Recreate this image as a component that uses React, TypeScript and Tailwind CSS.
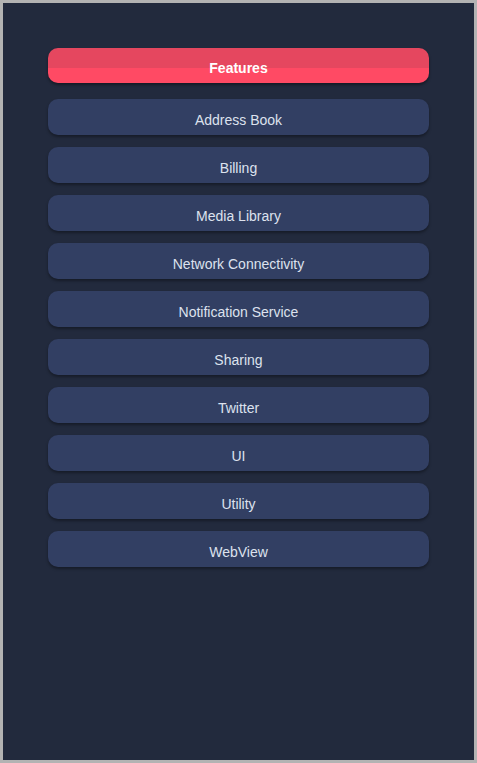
export default function App() {
  const items = [
    'Address Book',
    'Billing',
    'Media Library',
    'Network Connectivity',
    'Notification Service',
    'Sharing',
    'Twitter',
    'UI',
    'Utility',
    'WebView',
  ];

  return (
    <div className="w-[477px] h-[763px] bg-[#b3b3b3] p-[3px] font-['Liberation_Sans',Arial,sans-serif]">
      <div className="h-full bg-[#222a3d] px-[45px] pt-[45px]">
        <div className="h-[35px] rounded-[10px] bg-[linear-gradient(to_bottom,#e5475f_0%,#e5475f_57%,#ff4a64_57%,#ff4a64_100%)] shadow-[0_2px_3px_rgba(0,0,0,0.4)] flex items-center justify-center pt-[6px] text-[14px] font-bold text-white">
          Features
        </div>
        <div className="mt-[16px] flex flex-col gap-[12px]">
          {items.map((name) => (
            <div
              key={name}
              className="h-[36px] rounded-[10px] bg-[#323f63] shadow-[0_2px_3px_rgba(0,0,0,0.35)] flex items-center justify-center pt-[7px] text-[14px] text-[#dde2ee]"
            >
              {name}
            </div>
          ))}
        </div>
      </div>
    </div>
  );
}
